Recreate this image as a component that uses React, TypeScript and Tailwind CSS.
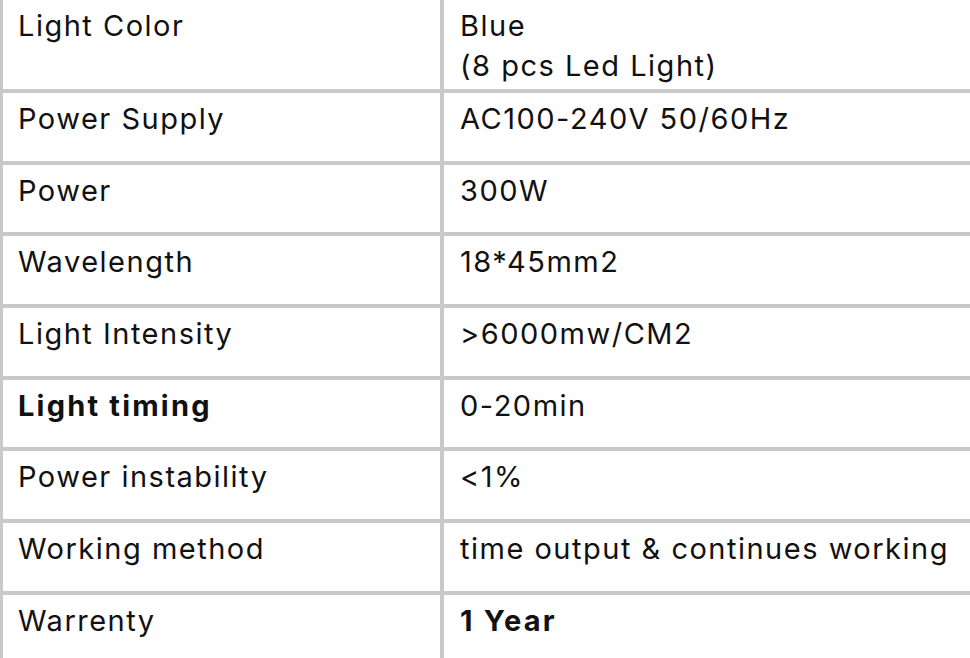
import React from 'react';

type Row = { label: string; value: string[]; boldLabel?: boolean; boldValue?: boolean };

const rows: Row[] = [
  { label: 'Light Color', value: ['Blue', '(8 pcs Led Light)'] },
  { label: 'Power Supply', value: ['AC100-240V 50/60Hz'] },
  { label: 'Power', value: ['300W'] },
  { label: 'Wavelength', value: ['18*45mm2'] },
  { label: 'Light Intensity', value: ['>6000mw/CM2'] },
  { label: 'Light timing', value: ['0-20min'], boldLabel: true },
  { label: 'Power instability', value: ['<1%'] },
  { label: 'Working method', value: ['time output & continues working'] },
  { label: 'Warrenty', value: ['1 Year'], boldValue: true },
];

const SpecRow: React.FC<{ row: Row; first: boolean }> = ({ row, first }) => {
  return (
    <div
      className={`grid grid-cols-[441px_1fr] shrink-0 ${
        first ? 'h-[89px]' : 'h-[71.67px] border-t-4 border-[#c9c9c9]'
      }`}
    >
      <div
        className={`border-r-4 border-[#c9c9c9] pl-[15px] pt-[6px] whitespace-nowrap ${
          row.boldLabel ? 'font-bold tracking-[2.2px]' : ''
        }`}
      >
        {row.label}
      </div>
      <div className={`pl-[16px] pt-[6px] whitespace-nowrap ${row.boldValue ? 'font-bold tracking-[2.2px]' : ''}`}>
        {row.value.map((line, i) => (
          <div key={i}>{line}</div>
        ))}
      </div>
    </div>
  );
};

export default function App() {
  return (
    <div className="w-[970px] h-[658px] overflow-hidden bg-white">
      <div
        className="flex flex-col border-l-[3px] border-[#c9c9c9] text-[29px] leading-[40px] tracking-[1.5px] text-[#111]"
        style={{ fontFamily: 'Inter, "Noto Sans", sans-serif' }}
      >
        {rows.map((row, i) => (
          <SpecRow key={row.label} row={row} first={i === 0} />
        ))}
      </div>
    </div>
  );
}
